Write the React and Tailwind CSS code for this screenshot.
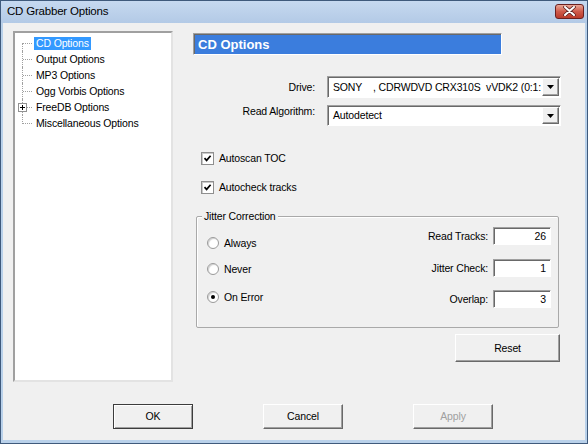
import React from "react";

const raised =
  "bg-[#f0f0f0] border border-t-white border-l-white border-b-[#696969] border-r-[#696969] shadow-[inset_-1px_-1px_0_#a0a0a0]";
const sunken =
  "bg-white border border-t-[#a0a0a0] border-l-[#a0a0a0] border-b-white border-r-white shadow-[inset_1px_1px_0_#696969]";

const Arrow = () => (
  <svg width="7" height="4" viewBox="0 0 7 4">
    <path d="M0 0 H7 L3.5 4 Z" fill="#000" />
  </svg>
);

const Combo = ({ value, h }) => (
  <div className={`flex w-[234px] ${h} ${sunken}`}>
    <div className="flex-1 flex items-center pl-[5px] overflow-hidden whitespace-pre">
      {value}
    </div>
    <div className={`w-[17px] my-[1px] mr-[1px] flex items-center justify-center ${raised}`}>
      <Arrow />
    </div>
  </div>
);

const Check = ({ label }) => (
  <div className="flex items-center h-[13px] ml-[8px] gap-[5px]">
    <div className="w-[13px] h-[13px] bg-white border border-[#8f8f8f] shadow-[inset_1px_1px_0_#c9c9c9] flex items-center justify-center">
      <svg width="9" height="9" viewBox="0 0 9 9">
        <polyline points="1.5,4.2 3.6,6.4 7.6,1.8" fill="none" stroke="#000" strokeWidth="1.7" />
      </svg>
    </div>
    <span>{label}</span>
  </div>
);

const Radio = ({ label, on }) => (
  <div className="flex items-center h-[16px] gap-[5px]">
    <div className="w-[12px] h-[12px] rounded-full bg-white border border-[#9a9a9a] shadow-[inset_1px_1px_1px_#d0d0d0] flex items-center justify-center">
      {on && <div className="w-[4px] h-[4px] rounded-full bg-black" />}
    </div>
    <span>{label}</span>
  </div>
);

const NumField = ({ label, value, className }) => (
  <div className={`flex items-center gap-[5px] ${className}`}>
    <span>{label}</span>
    <div className={`w-[58px] h-[18px] flex items-center justify-end pr-[4px] ${sunken}`}>
      {value}
    </div>
  </div>
);

const treeItems = [
  "CD Options",
  "Output Options",
  "MP3 Options",
  "Ogg Vorbis Options",
  "FreeDB Options",
  "Miscellaneous Options",
];

const Tree = () => (
  <div className="w-[160px] h-[351px] border-2 border-t-[#a0a0a0] border-l-[#a0a0a0] border-b-[#e3e3e3] border-r-[#e3e3e3] bg-white pt-[2px]">
    {treeItems.map((item, i) => {
      const first = i === 0;
      const last = i === treeItems.length - 1;
      return (
        <div key={item} className="flex items-center h-[16px]">
          <div className="relative w-[17px] h-[16px]">
            <div
              className={`absolute left-[7px] w-0 border-l border-dotted border-[#a0a0a0] ${
                first ? "top-[8px] bottom-0" : last ? "top-0 h-[9px]" : "top-0 bottom-0"
              }`}
            />
            <div className="absolute left-[8px] top-[8px] w-[9px] h-0 border-t border-dotted border-[#a0a0a0]" />
            {item === "FreeDB Options" && (
              <div className="absolute left-[3px] top-[4px] w-[9px] h-[9px] bg-white border border-[#919191] flex items-center justify-center">
                <svg width="5" height="5" viewBox="0 0 5 5">
                  <path d="M0 2.5 H5 M2.5 0 V5" stroke="#000" strokeWidth="1" />
                </svg>
              </div>
            )}
          </div>
          <span
            className={`ml-[2px] px-[2px] h-[13px] flex items-center ${
              first ? "bg-[#3399ff] text-white" : ""
            }`}
          >
            {item}
          </span>
        </div>
      );
    })}
  </div>
);

const Button = ({ children, def, disabled, className }) => (
  <div
    className={`flex items-center justify-center ${
      def
        ? "bg-[#f0f0f0] border border-[#3c3c3c] shadow-[inset_1px_1px_0_white,inset_-1px_-1px_0_#a0a0a0]"
        : raised
    } ${disabled ? "text-[#a0a0a0]" : ""} ${className}`}
  >
    {children}
  </div>
);

export default function App() {
  return (
    <div className="w-[588px] h-[444px] flex flex-col bg-[#b9d1ea] border border-[#3f5a7c] px-[2px] pb-[3px] font-['Liberation_Sans',Arial,sans-serif] text-[10.5px] tracking-[-0.15px] text-black leading-none">
      {/* title bar */}
      <div className="h-[22px] flex items-center justify-between -mx-[2px] pl-[6px] pr-[3px] bg-gradient-to-b from-[#c6d9f0] to-[#b3cae6]">
        <span className="text-[11.5px] tracking-[-0.2px] text-black">CD Grabber Options</span>
        <div className="w-[29px] h-[15px] mb-[2px] rounded-[3px] border border-[#6a2020] bg-gradient-to-b from-[#e9a797] via-[#cf5a4a] to-[#b93a2a] flex items-center justify-center">
          <svg width="13" height="10" viewBox="0 0 13 10">
            <path d="M2 1 L11 9 M11 1 L2 9" stroke="#5a2020" strokeWidth="3.6" strokeLinecap="round" />
            <path d="M2 1 L11 9 M11 1 L2 9" stroke="#fff" strokeWidth="2" strokeLinecap="round" />
          </svg>
        </div>
      </div>

      {/* client area */}
      <div className="flex-1 bg-[#f0f0f0] flex flex-col">
        <div className="flex pl-[10px] pt-[8px]">
          <Tree />

          <div className="ml-[20px] w-[368px] flex flex-col">
            <div className="mt-[2px] w-[309px] h-[22px] bg-[#3b7ddd] border border-t-[#a0a0a0] border-l-[#a0a0a0] border-b-white border-r-white shadow-[inset_1px_1px_0_#696969] flex items-center pl-[4px] text-white font-bold text-[13px] tracking-normal">
              CD Options
            </div>

            <div className="mt-[21px] flex items-center">
              <span className="w-[122px] text-right">Drive:</span>
              <div className="ml-[12px]">
                <Combo h="h-[22px]" value="SONY    , CDRWDVD CRX310S  vVDK2 (0:1:" />
              </div>
            </div>
            <div className="mt-[7px] flex items-start">
              <span className="w-[122px] text-right mt-[1px]">Read Algorithm:</span>
              <div className="ml-[12px]">
                <Combo h="h-[21px]" value="Autodetect" />
              </div>
            </div>

            <div className="mt-[26px]">
              <Check label="Autoscan TOC" />
            </div>
            <div className="mt-[16px]">
              <Check label="Autocheck tracks" />
            </div>

            {/* group box */}
            <div className="relative mt-[22px] ml-[3px] w-[363px] h-[112px] border border-[#a9a9a9] shadow-[inset_1px_1px_0_white] rounded-[2px] flex justify-between">
              <span className="absolute -top-[6px] left-[5px] px-[2px] bg-[#f0f0f0]">
                Jitter Correction
              </span>
              <div className="pl-[10px] pt-[18px] flex flex-col">
                <Radio label="Always" />
                <div className="mt-[10px]">
                  <Radio label="Never" />
                </div>
                <div className="mt-[12px]">
                  <Radio label="On Error" on />
                </div>
              </div>
              <div className="pr-[7px] pt-[10px] flex flex-col items-end">
                <NumField label="Read Tracks:" value="26" />
                <NumField label="Jitter Check:" value="1" className="mt-[14px]" />
                <NumField label="Overlap:" value="3" className="mt-[13px]" />
              </div>
            </div>

            <Button className="mt-[6px] self-end mr-[1px] w-[105px] h-[28px]">Reset</Button>
          </div>
        </div>

        <div className="flex pl-[110px] mt-[22px] gap-[70px]">
          <Button def className="w-[80px] h-[25px]">OK</Button>
          <Button className="w-[80px] h-[25px]">Cancel</Button>
          <Button disabled className="w-[80px] h-[25px]">Apply</Button>
        </div>
      </div>
    </div>
  );
}
